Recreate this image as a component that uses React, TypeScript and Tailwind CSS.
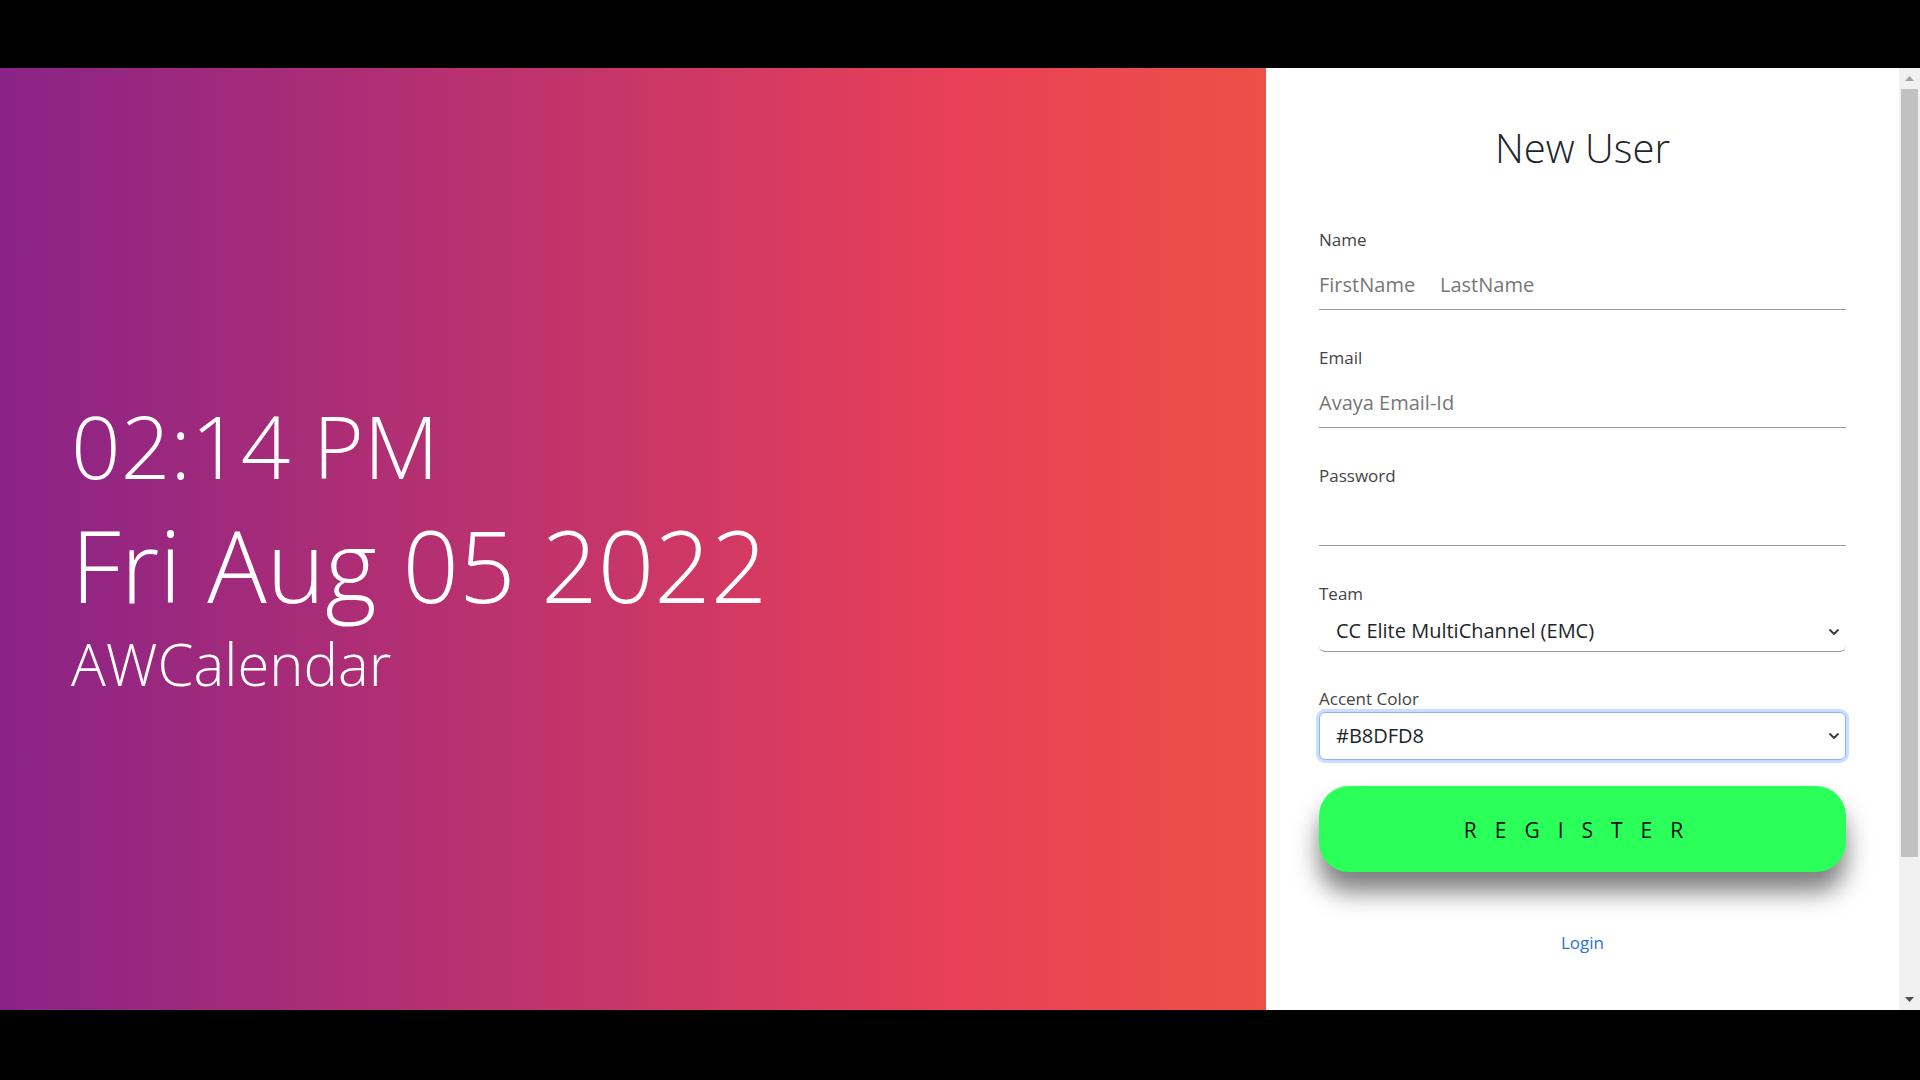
import { useState } from 'react';

const teams = ['CC Elite MultiChannel (EMC)', 'Avaya Experience Platform', 'Workforce Engagement'];
const accents = ['#B8DFD8', '#F7C8E0', '#DFFFD8', '#B4E4FF'];

function Chevron() {
    return (
        <svg
            className="pointer-events-none absolute right-[5px] top-1/2 -translate-y-1/2"
            width="14"
            height="14"
            viewBox="0 0 14 14"
            fill="none"
        >
            <path d="M3 5l4 4 4-4" stroke="#343a40" strokeWidth="1.8" strokeLinecap="round" strokeLinejoin="round" />
        </svg>
    );
}

function Label({ children }: { children: string }) {
    return <label className="block text-[17px] leading-[24px] text-[#444]">{children}</label>;
}

function Scrollbar() {
    return (
        <div className="flex w-[21px] flex-col bg-[#f1f1f1]">
            <div className="flex h-[21px] items-center justify-center">
                <svg width="9" height="5" viewBox="0 0 9 5">
                    <path d="M0 5L4.5 0L9 5Z" fill="#a3a3a3" />
                </svg>
            </div>
            <div className="ml-[2px] h-[768px] w-[17px] bg-[#c1c1c1]" />
            <div className="flex-1" />
            <div className="flex h-[21px] items-center justify-center">
                <svg width="9" height="5" viewBox="0 0 9 5">
                    <path d="M0 0L4.5 5L9 0Z" fill="#505050" />
                </svg>
            </div>
        </div>
    );
}

export default function App() {
    const [team, setTeam] = useState(teams[0]);
    const [accent, setAccent] = useState(accents[0]);

    return (
        <div className="flex h-[1080px] w-[1920px] flex-col overflow-hidden bg-black font-['Open_Sans',sans-serif]">
            <div className="h-[68px]" />
            <div className="flex h-[942px]">
                {/* clock side */}
                <section className="w-[1266px] bg-[linear-gradient(to_right,#8A2387_0%,#E94057_75.8%,#EC5046_100%)] pl-[71px] pt-[334px] font-light text-white">
                    <div className="text-[87px] leading-none">02:14 PM</div>
                    <div className="mt-[26px] text-[99px] leading-none">Fri Aug 05 2022</div>
                    <div className="mt-[21px] text-[58px] leading-none">AWCalendar</div>
                </section>

                {/* register form */}
                <section className="w-[633px] bg-white">
                    <form className="mx-auto w-[527px] pt-[60px]" onSubmit={(e) => e.preventDefault()}>
                        <h1 className="text-center text-[40px] font-light leading-none text-[#212529]">New User</h1>

                        <div className="mt-[60px]">
                            <Label>Name</Label>
                            <div className="mt-[14px] flex border-b border-[#9a9a9a]">
                                <input
                                    className="w-[121px] bg-transparent pb-[10px] pt-[5px] text-[20px] leading-[28px] text-[#212529] outline-none placeholder:text-[#777]"
                                    placeholder="FirstName"
                                />
                                <input
                                    className="flex-1 bg-transparent pb-[10px] pt-[5px] text-[20px] leading-[28px] text-[#212529] outline-none placeholder:text-[#777]"
                                    placeholder="LastName"
                                />
                            </div>
                        </div>

                        <div className="mt-[36px]">
                            <Label>Email</Label>
                            <input
                                className="mt-[14px] block w-full border-b border-[#9a9a9a] bg-transparent pb-[10px] pt-[5px] text-[20px] leading-[28px] text-[#212529] outline-none placeholder:text-[#777]"
                                placeholder="Avaya Email-Id"
                            />
                        </div>

                        <div className="mt-[36px]">
                            <Label>Password</Label>
                            <input
                                type="password"
                                className="mt-[14px] block w-full border-b border-[#9a9a9a] bg-transparent pb-[10px] pt-[5px] text-[20px] leading-[28px] text-[#212529] outline-none"
                            />
                        </div>

                        <div className="mt-[36px]">
                            <Label>Team</Label>
                            <div className="relative mt-[6px]">
                                <select
                                    value={team}
                                    onChange={(e) => setTeam(e.target.value)}
                                    className="block w-full appearance-none rounded-md border-b border-[#9a9a9a] bg-white pb-[6px] pl-[17px] pt-[5px] text-[20px] leading-[28px] text-[#212529] outline-none"
                                >
                                    {teams.map((t) => (
                                        <option key={t}>{t}</option>
                                    ))}
                                </select>
                                <Chevron />
                            </div>
                        </div>

                        <div className="mt-[35px]">
                            <Label>Accent Color</Label>
                            <div className="relative mt-[1px]">
                                <select
                                    value={accent}
                                    onChange={(e) => setAccent(e.target.value)}
                                    className="block w-full appearance-none rounded-md border border-[#86b7fe] bg-white py-[9px] pl-[16px] text-[20px] leading-[28px] text-[#212529] shadow-[0_0_0_3px_rgba(13,110,253,0.22)] outline-none"
                                >
                                    {accents.map((a) => (
                                        <option key={a}>{a}</option>
                                    ))}
                                </select>
                                <Chevron />
                            </div>
                        </div>

                        <button
                            type="submit"
                            className="mt-[26px] flex h-[86px] w-full items-center justify-center rounded-[30px] bg-[#2bff5a] pt-[3px] text-[21px] tracking-[18px] text-[#111] shadow-[0_20px_24px_rgba(0,0,0,0.5)]"
                        >
                            REGISTER
                        </button>

                        <div className="mt-[59px] text-center text-[17px] leading-[24px]">
                            <a href="#" className="text-[#2a74d6]">
                                Login
                            </a>
                        </div>
                    </form>
                </section>

                <Scrollbar />
            </div>
            <div className="flex-1" />
        </div>
    );
}
